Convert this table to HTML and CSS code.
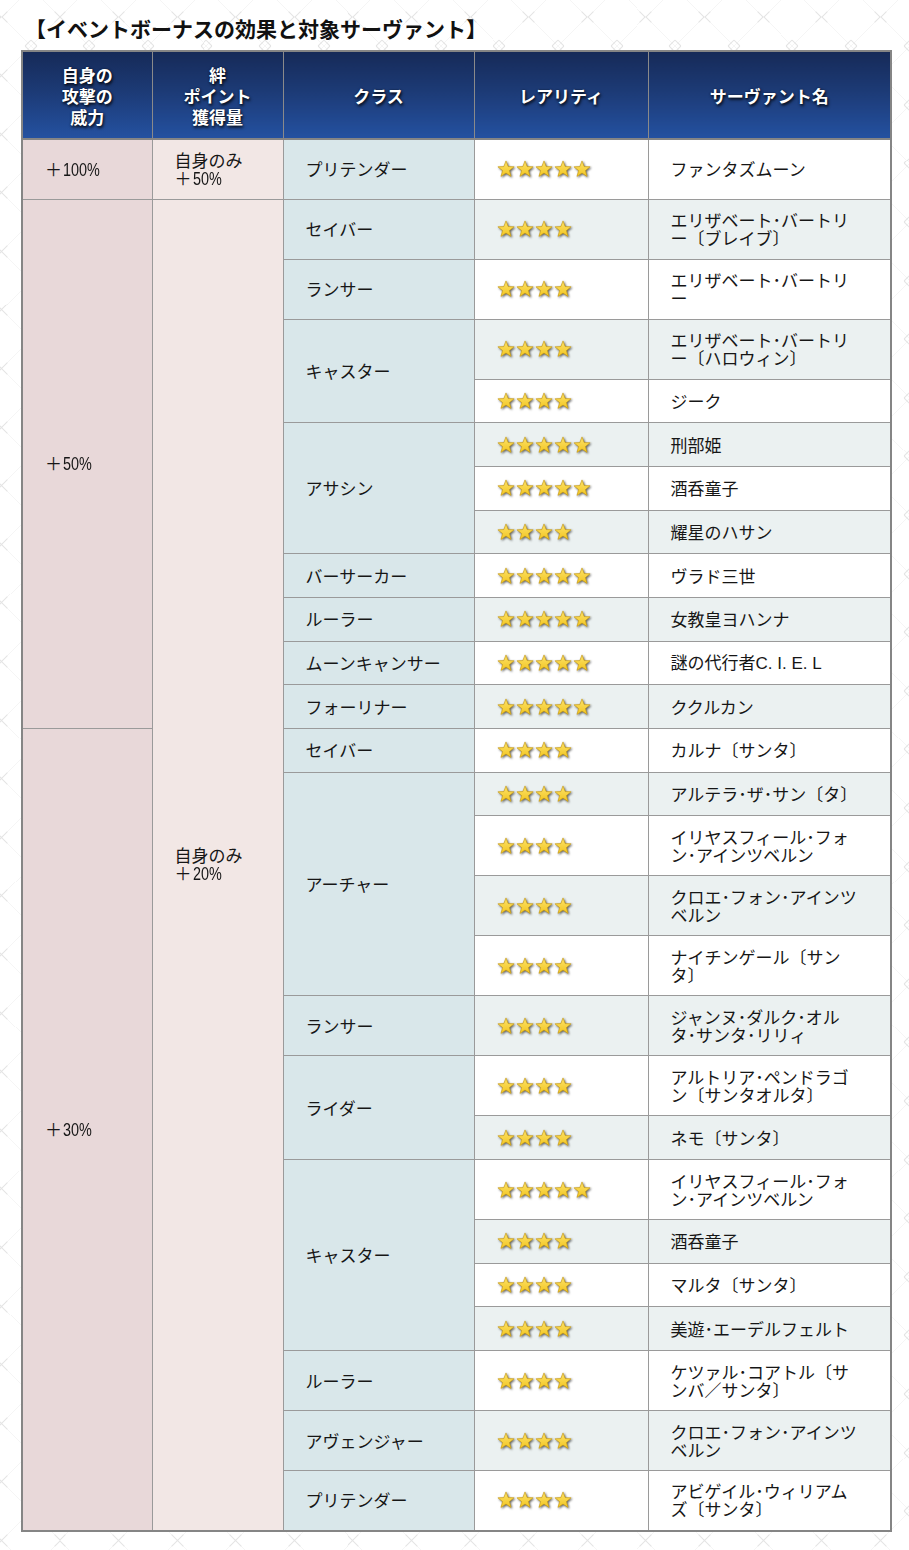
FILE: index.html
```html
<!DOCTYPE html>
<html lang="ja">
<head>
<meta charset="utf-8">
<title>イベントボーナスの効果と対象サーヴァント</title>
<link rel="stylesheet" href="styles.css">
</head>
<body>
<svg class="defs" width="0" height="0" aria-hidden="true">
  <defs>
    <linearGradient id="gold" x1="0" y1="0" x2="0" y2="1">
      <stop offset="0" stop-color="#fde36a"/>
      <stop offset="1" stop-color="#f2c521"/>
    </linearGradient>
    <symbol id="star" viewBox="0 0 20 20">
      <polygon points="10,1 12.4,7.3 19,7.6 13.8,11.8 15.6,18.2 10,14.5 4.4,18.2 6.2,11.8 1,7.6 7.6,7.3" fill="url(#gold)" stroke="#c99a12" stroke-width="0.7" stroke-linejoin="round"/>
    </symbol>
  </defs>
</svg>
<main class="page">
  <h1 class="title">【イベントボーナスの効果と対象サーヴァント】</h1>
  <table class="bonus">
    <colgroup>
      <col class="c-pow"><col class="c-bond"><col class="c-cls"><col class="c-rar"><col class="c-name">
    </colgroup>
    <thead>
      <tr>
        <th>自身の<br>攻撃の<br>威力</th>
        <th>絆<br>ポイント<br>獲得量</th>
        <th>クラス</th>
        <th>レアリティ</th>
        <th>サーヴァント名</th>
      </tr>
    </thead>
    <tbody>
      <tr class="d odd">
        <td class="pow">＋<span class="num">100%</span></td>
        <td class="bond">自身のみ<br>＋<span class="num">50%</span></td>
        <td class="cls">プリテンダー</td>
        <td class="rar"><span class="stars"><svg><use href="#star"/></svg><svg><use href="#star"/></svg><svg><use href="#star"/></svg><svg><use href="#star"/></svg><svg><use href="#star"/></svg></span></td>
        <td class="name">ファンタズムーン</td>
      </tr>
      <tr class="d even">
        <td class="pow" rowspan="11">＋<span class="num">50%</span></td>
        <td class="bond" rowspan="26">自身のみ<br>＋<span class="num">20%</span></td>
        <td class="cls">セイバー</td>
        <td class="rar"><span class="stars"><svg><use href="#star"/></svg><svg><use href="#star"/></svg><svg><use href="#star"/></svg><svg><use href="#star"/></svg></span></td>
        <td class="name">エリザベート･バートリー〔ブレイブ〕</td>
      </tr>
      <tr class="d odd">
        <td class="cls">ランサー</td>
        <td class="rar"><span class="stars"><svg><use href="#star"/></svg><svg><use href="#star"/></svg><svg><use href="#star"/></svg><svg><use href="#star"/></svg></span></td>
        <td class="name">エリザベート･バートリー</td>
      </tr>
      <tr class="d even">
        <td class="cls" rowspan="2">キャスター</td>
        <td class="rar"><span class="stars"><svg><use href="#star"/></svg><svg><use href="#star"/></svg><svg><use href="#star"/></svg><svg><use href="#star"/></svg></span></td>
        <td class="name">エリザベート･バートリー〔ハロウィン〕</td>
      </tr>
      <tr class="s odd">
        <td class="rar"><span class="stars"><svg><use href="#star"/></svg><svg><use href="#star"/></svg><svg><use href="#star"/></svg><svg><use href="#star"/></svg></span></td>
        <td class="name">ジーク</td>
      </tr>
      <tr class="s even">
        <td class="cls" rowspan="3">アサシン</td>
        <td class="rar"><span class="stars"><svg><use href="#star"/></svg><svg><use href="#star"/></svg><svg><use href="#star"/></svg><svg><use href="#star"/></svg><svg><use href="#star"/></svg></span></td>
        <td class="name">刑部姫</td>
      </tr>
      <tr class="s odd">
        <td class="rar"><span class="stars"><svg><use href="#star"/></svg><svg><use href="#star"/></svg><svg><use href="#star"/></svg><svg><use href="#star"/></svg><svg><use href="#star"/></svg></span></td>
        <td class="name">酒呑童子</td>
      </tr>
      <tr class="s even">
        <td class="rar"><span class="stars"><svg><use href="#star"/></svg><svg><use href="#star"/></svg><svg><use href="#star"/></svg><svg><use href="#star"/></svg></span></td>
        <td class="name">耀星のハサン</td>
      </tr>
      <tr class="s odd">
        <td class="cls">バーサーカー</td>
        <td class="rar"><span class="stars"><svg><use href="#star"/></svg><svg><use href="#star"/></svg><svg><use href="#star"/></svg><svg><use href="#star"/></svg><svg><use href="#star"/></svg></span></td>
        <td class="name">ヴラド三世</td>
      </tr>
      <tr class="s even">
        <td class="cls">ルーラー</td>
        <td class="rar"><span class="stars"><svg><use href="#star"/></svg><svg><use href="#star"/></svg><svg><use href="#star"/></svg><svg><use href="#star"/></svg><svg><use href="#star"/></svg></span></td>
        <td class="name">女教皇ヨハンナ</td>
      </tr>
      <tr class="s odd">
        <td class="cls">ムーンキャンサー</td>
        <td class="rar"><span class="stars"><svg><use href="#star"/></svg><svg><use href="#star"/></svg><svg><use href="#star"/></svg><svg><use href="#star"/></svg><svg><use href="#star"/></svg></span></td>
        <td class="name">謎の代行者<span class="latin">C. I. E. L</span></td>
      </tr>
      <tr class="s even">
        <td class="cls">フォーリナー</td>
        <td class="rar"><span class="stars"><svg><use href="#star"/></svg><svg><use href="#star"/></svg><svg><use href="#star"/></svg><svg><use href="#star"/></svg><svg><use href="#star"/></svg></span></td>
        <td class="name">ククルカン</td>
      </tr>
      <tr class="s odd">
        <td class="pow" rowspan="15">＋<span class="num">30%</span></td>
        <td class="cls">セイバー</td>
        <td class="rar"><span class="stars"><svg><use href="#star"/></svg><svg><use href="#star"/></svg><svg><use href="#star"/></svg><svg><use href="#star"/></svg></span></td>
        <td class="name">カルナ〔サンタ〕</td>
      </tr>
      <tr class="s even">
        <td class="cls" rowspan="4">アーチャー</td>
        <td class="rar"><span class="stars"><svg><use href="#star"/></svg><svg><use href="#star"/></svg><svg><use href="#star"/></svg><svg><use href="#star"/></svg></span></td>
        <td class="name">アルテラ･ザ･サン〔タ〕</td>
      </tr>
      <tr class="d odd">
        <td class="rar"><span class="stars"><svg><use href="#star"/></svg><svg><use href="#star"/></svg><svg><use href="#star"/></svg><svg><use href="#star"/></svg></span></td>
        <td class="name">イリヤスフィール･フォン･アインツベルン</td>
      </tr>
      <tr class="d even">
        <td class="rar"><span class="stars"><svg><use href="#star"/></svg><svg><use href="#star"/></svg><svg><use href="#star"/></svg><svg><use href="#star"/></svg></span></td>
        <td class="name">クロエ･フォン･アインツベルン</td>
      </tr>
      <tr class="d odd">
        <td class="rar"><span class="stars"><svg><use href="#star"/></svg><svg><use href="#star"/></svg><svg><use href="#star"/></svg><svg><use href="#star"/></svg></span></td>
        <td class="name">ナイチンゲール〔サンタ〕</td>
      </tr>
      <tr class="d even">
        <td class="cls">ランサー</td>
        <td class="rar"><span class="stars"><svg><use href="#star"/></svg><svg><use href="#star"/></svg><svg><use href="#star"/></svg><svg><use href="#star"/></svg></span></td>
        <td class="name">ジャンヌ･ダルク･オルタ･サンタ･リリィ</td>
      </tr>
      <tr class="d odd">
        <td class="cls" rowspan="2">ライダー</td>
        <td class="rar"><span class="stars"><svg><use href="#star"/></svg><svg><use href="#star"/></svg><svg><use href="#star"/></svg><svg><use href="#star"/></svg></span></td>
        <td class="name">アルトリア･ペンドラゴン〔サンタオルタ〕</td>
      </tr>
      <tr class="s even">
        <td class="rar"><span class="stars"><svg><use href="#star"/></svg><svg><use href="#star"/></svg><svg><use href="#star"/></svg><svg><use href="#star"/></svg></span></td>
        <td class="name">ネモ〔サンタ〕</td>
      </tr>
      <tr class="d odd">
        <td class="cls" rowspan="4">キャスター</td>
        <td class="rar"><span class="stars"><svg><use href="#star"/></svg><svg><use href="#star"/></svg><svg><use href="#star"/></svg><svg><use href="#star"/></svg><svg><use href="#star"/></svg></span></td>
        <td class="name">イリヤスフィール･フォン･アインツベルン</td>
      </tr>
      <tr class="s even">
        <td class="rar"><span class="stars"><svg><use href="#star"/></svg><svg><use href="#star"/></svg><svg><use href="#star"/></svg><svg><use href="#star"/></svg></span></td>
        <td class="name">酒呑童子</td>
      </tr>
      <tr class="s odd">
        <td class="rar"><span class="stars"><svg><use href="#star"/></svg><svg><use href="#star"/></svg><svg><use href="#star"/></svg><svg><use href="#star"/></svg></span></td>
        <td class="name">マルタ〔サンタ〕</td>
      </tr>
      <tr class="s even">
        <td class="rar"><span class="stars"><svg><use href="#star"/></svg><svg><use href="#star"/></svg><svg><use href="#star"/></svg><svg><use href="#star"/></svg></span></td>
        <td class="name">美遊･エーデルフェルト</td>
      </tr>
      <tr class="d odd">
        <td class="cls">ルーラー</td>
        <td class="rar"><span class="stars"><svg><use href="#star"/></svg><svg><use href="#star"/></svg><svg><use href="#star"/></svg><svg><use href="#star"/></svg></span></td>
        <td class="name">ケツァル･コアトル〔サンバ／サンタ〕</td>
      </tr>
      <tr class="d even">
        <td class="cls">アヴェンジャー</td>
        <td class="rar"><span class="stars"><svg><use href="#star"/></svg><svg><use href="#star"/></svg><svg><use href="#star"/></svg><svg><use href="#star"/></svg></span></td>
        <td class="name">クロエ･フォン･アインツベルン</td>
      </tr>
      <tr class="d odd">
        <td class="cls">プリテンダー</td>
        <td class="rar"><span class="stars"><svg><use href="#star"/></svg><svg><use href="#star"/></svg><svg><use href="#star"/></svg><svg><use href="#star"/></svg></span></td>
        <td class="name">アビゲイル･ウィリアムズ〔サンタ〕</td>
      </tr>
    </tbody>
  </table>
</main>
</body>
</html>
```
FILE: styles.css
```css
html, body {
  margin: 0;
  padding: 0;
}
body {
  background-color: #ffffff;
  background-image: url("data:image/svg+xml,%3Csvg xmlns='http://www.w3.org/2000/svg' width='100' height='100' viewBox='0 0 100 100'%3E%3Cpath d='M0 0L100 100M100 0L0 100' stroke='%23f4f4f4' stroke-width='1.6' fill='none'/%3E%3Cpath d='M40 40L60 60M60 40L40 60M0 10L10 0M0 -10L10 0M90 0L100 10M90 0L100 -10M0 90L10 100M0 110L10 100M90 100L100 90M90 100L100 110M-10 0L0 10M-10 100L0 90M110 0L100 10M110 100L100 90' stroke='%23e4e4e4' stroke-width='1.8' fill='none'/%3E%3C/svg%3E");
  background-size: 58.6px 58.6px;
  background-position: -27.9px -12.3px;
  color: #161616;
  font-family: "Noto Sans CJK JP", sans-serif;
}
.defs {
  position: absolute;
  width: 0;
  height: 0;
  overflow: hidden;
}
.page {
  padding: 0 0 20px 21px;
}
.title {
  margin: 0;
  padding: 6px 0 0 4px;
  height: 44px;
  line-height: 44px;
  font-family: "Noto Sans CJK JP", sans-serif;
  font-size: 21px;
  font-weight: 700;
  color: #111;
}
.bonus {
  width: 869px;
  table-layout: fixed;
  border-collapse: collapse;
  border: 2px solid #858585;
  font-size: 17px;
  line-height: 18px;
}
.c-pow { width: 130px; }
.c-bond { width: 131px; }
.c-cls { width: 191px; }
.c-rar { width: 174px; }
.c-name { width: 243px; }

.bonus th {
  height: 86px;
  padding: 0;
  border: 1px solid #8a8a8a;
  border-bottom: 2px solid #858585;
  background: linear-gradient(to bottom, #162a58 0%, #1c3a75 45%, #2451a0 100%);
  color: #fff;
  font-weight: 700;
  font-size: 17px;
  line-height: 21px;
  text-align: center;
  vertical-align: middle;
  text-shadow: 1px 2px 3px rgba(0, 0, 0, 0.85), 0 0 2px rgba(0, 0, 0, 0.5);
}
.bonus td {
  border: 1px solid #9a9a9a;
  padding: 0 8px 0 22px;
  vertical-align: middle;
  text-align: left;
}
.bonus tr.d { height: 60px; }
.bonus tr.s { height: 43.7px; }

.bonus td.pow { background: #e8d8d9; }
.bonus td.bond { background: #f2e7e5; }
.bonus td.cls { background: #d9e7ea; }
.bonus tr.odd td.rar,
.bonus tr.odd td.name { background: #ffffff; }
.bonus tr.even td.rar,
.bonus tr.even td.name { background: #ebf1f1; }
.bonus td.name { padding-right: 28px; }

.num {
  display: inline-block;
  font-family: "Liberation Sans", sans-serif;
  font-size: 18px;
  line-height: 18px;
  transform: scaleX(0.8);
  transform-origin: 0 50%;
  margin-left: 1px;
}
.latin {
  font-family: "Liberation Sans", sans-serif;
}

.stars {
  display: flex;
  align-items: center;
  gap: 1px;
}
.stars svg {
  width: 18px;
  height: 18px;
  flex: none;
  filter: drop-shadow(1.2px 1.4px 0.8px rgba(40, 40, 40, 0.75));
}
```
